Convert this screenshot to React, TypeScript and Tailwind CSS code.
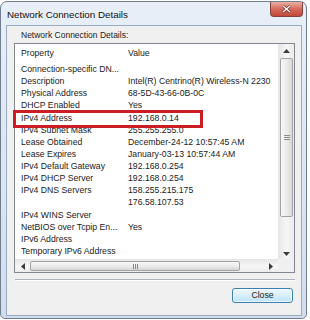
import React from 'react';

const rows: [string, string][] = [
  ['Connection-specific DN...', ''],
  ['Description', 'Intel(R) Centrino(R) Wireless-N 2230'],
  ['Physical Address', '68-5D-43-66-0B-0C'],
  ['DHCP Enabled', 'Yes'],
  ['IPv4 Address', '192.168.0.14'],
  ['IPv4 Subnet Mask', '255.255.255.0'],
  ['Lease Obtained', 'December-24-12 10:57:45 AM'],
  ['Lease Expires', 'January-03-13 10:57:44 AM'],
  ['IPv4 Default Gateway', '192.168.0.254'],
  ['IPv4 DHCP Server', '192.168.0.254'],
  ['IPv4 DNS Servers', '158.255.215.175'],
  ['', '176.58.107.53'],
  ['IPv4 WINS Server', ''],
  ['NetBIOS over Tcpip En...', 'Yes'],
  ['IPv6 Address', ''],
  ['Temporary IPv6 Address', ''],
  ['Link-local IPv6 Address', 'fe80::5d4c:2a6b:9e1f:70c3%11'],
];

const Arrow: React.FC<{ dir: 'up' | 'down' | 'left' | 'right' }> = ({ dir }) => {
  const pts = {
    up: '0,4 3.5,0 7,4',
    down: '0,0 3.5,4 7,0',
    left: '4,0 0,3.5 4,7',
    right: '0,0 4,3.5 0,7',
  }[dir];
  const vertical = dir === 'up' || dir === 'down';
  return (
    <svg
      width={vertical ? 7 : 4}
      height={vertical ? 4 : 7}
      viewBox={vertical ? '0 0 7 4' : '0 0 4 7'}>
      <polygon points={pts} fill="#3b3b3b" />
    </svg>
  );
};

export default function App() {
  return (
    <div className="w-[310px] h-[320px] bg-white pt-px font-['Liberation_Sans',Arial,sans-serif] text-[#1b1b1b]">
      {/* window frame */}
      <div className="w-[307px] h-[318px] rounded-t-[7px] rounded-b-[5px] border border-[#6f7e91] bg-gradient-to-b from-[#e8eff8] via-[#dce7f3] to-[#d0deee] flex flex-col pl-[5px] pr-[4px] pb-[2px]">
        {/* title bar */}
        <div className="h-[23px] flex items-start justify-between">
          <span className="ml-px mt-[6px] text-[9.8px] leading-[14px] text-[#111]">
            Network Connection Details
          </span>
          <div className="w-[33px] h-[15px] -mr-px rounded-b-[4px] border border-t-0 border-[#83423b] bg-gradient-to-b from-[#eab0a6] via-[#d56a5c] to-[#c2483a] flex items-center justify-center">
            <svg width="9" height="8" viewBox="0 0 9 8">
              <path d="M1 1 L8 7 M8 1 L1 7" stroke="#5a2019" strokeWidth="2.6" />
              <path d="M1 1 L8 7 M8 1 L1 7" stroke="#fff" strokeWidth="1.5" />
            </svg>
          </div>
        </div>

        {/* client area */}
        <div className="flex-1 border border-[#9aabbf] bg-[#f0f0f0] flex flex-col">
          <div className="ml-[14px] mt-[2px] h-[14px] leading-[14px] text-[8.5px]">
            Network Connection Details:
          </div>

          {/* list view */}
          <div className="relative ml-[7px] mt-px w-[281px] h-[230px] border border-[#828790] bg-white flex flex-col">
            <div className="h-[215px] flex">
              <div className="flex-1 overflow-hidden text-[8.7px] whitespace-nowrap">
                <div className="h-[19px] grid grid-cols-[113px_1fr] items-center">
                  <span className="pl-[6px]">Property</span>
                  <span>Value</span>
                </div>
                {rows.map(([prop, val], i) => (
                  <div
                    key={i}
                    className="h-[12.13px] leading-[12.13px] grid grid-cols-[113px_1fr]">
                    <span className="pl-[6px] overflow-hidden">{prop}</span>
                    <span>{val}</span>
                  </div>
                ))}
              </div>

              {/* vertical scrollbar */}
              <div className="w-[16px] bg-gradient-to-r from-[#e8e8e8] via-[#f6f6f6] to-[#ececec] border-l border-[#e6e6e6] flex flex-col">
                <div className="h-[14px] flex items-center justify-center">
                  <Arrow dir="up" />
                </div>
                <div className="mx-[1px] h-[159px] rounded-[2px] border border-[#a3a3a3] bg-gradient-to-r from-[#f7f7f7] via-[#ececec] to-[#d9d9d9] flex flex-col items-center justify-center gap-[1px]">
                  <div className="w-[6px] h-px bg-[#8a8a8a]" />
                  <div className="w-[6px] h-px bg-[#8a8a8a]" />
                  <div className="w-[6px] h-px bg-[#8a8a8a]" />
                </div>
                <div className="flex-1" />
                <div className="h-[15px] flex items-center justify-center pt-[4px]">
                  <Arrow dir="down" />
                </div>
              </div>
            </div>

            {/* horizontal scrollbar */}
            <div className="h-[13px] flex">
              <div className="flex-1 flex bg-gradient-to-b from-[#e8e8e8] via-[#f6f6f6] to-[#ececec] border-t border-[#e6e6e6]">
                <div className="w-[15px] flex items-center justify-center">
                  <Arrow dir="left" />
                </div>
                <div className="w-[210px] my-px rounded-[2px] border border-[#a3a3a3] bg-gradient-to-b from-[#f7f7f7] via-[#ececec] to-[#d6d6d6] flex items-center justify-center gap-[1px]">
                  <div className="w-px h-[5px] bg-[#8a8a8a]" />
                  <div className="w-px h-[5px] bg-[#8a8a8a]" />
                  <div className="w-px h-[5px] bg-[#8a8a8a]" />
                </div>
                <div className="flex-1" />
                <div className="w-[15px] flex items-center justify-center">
                  <Arrow dir="right" />
                </div>
              </div>
              <div className="w-[16px] bg-[#f0f0f0]" />
            </div>

            {/* red highlight */}
            <div className="absolute left-[-2px] top-[66px] w-[190px] h-[18px] border-[3px] border-[#cc1d24]" />
          </div>

          {/* separator */}
          <div className="ml-[8px] mt-[6px] w-[280px] h-[2px] border-t border-[#a9b3bd] border-b border-b-white" />

          <div className="mt-[7px] mr-[8px] self-end w-[61px] h-[15px] rounded-[3px] border border-[#3c7fb1] bg-gradient-to-b from-[#eef7fd] via-[#d8eefb] to-[#bde3f8] shadow-[inset_0_0_0_1px_rgba(255,255,255,0.7)] flex items-center justify-center text-[8.7px] leading-none">
            Close
          </div>
        </div>
      </div>
    </div>
  );
}
